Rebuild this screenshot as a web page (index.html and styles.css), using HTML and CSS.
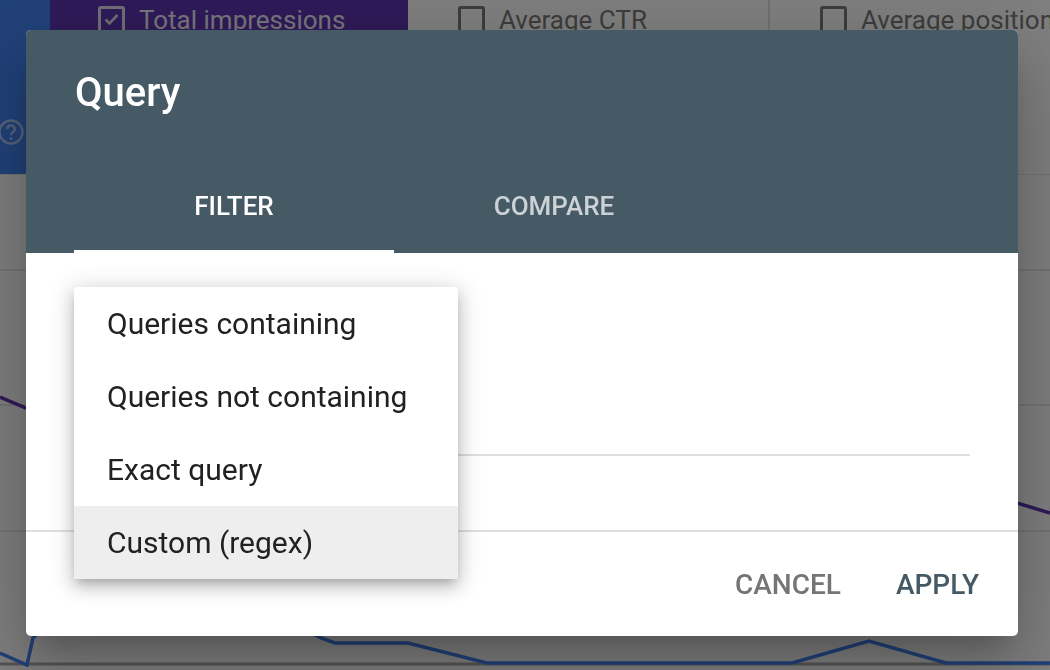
FILE: index.html
```html
<!DOCTYPE html>
<html lang="en">
  <head>
    <meta charset="UTF-8" />
    <meta name="viewport" content="width=device-width, initial-scale=1.0" />
    <title>Performance - Query filter</title>
    <link rel="stylesheet" href="styles.css">
  </head>
  <body>
    <div class="page">
      <div class="metrics">
        <div class="metric clicks">
          <svg class="help" width="26" height="26" viewBox="0 0 26 26">
            <circle cx="13" cy="13" r="11.5" fill="none" stroke="currentColor" stroke-width="2.4" />
            <path d="M9.3 10.2a3.7 3.7 0 1 1 5.6 3.1c-1.3.8-1.9 1.4-1.9 2.9" fill="none" stroke="currentColor" stroke-width="2.4" />
            <circle cx="13" cy="19.6" r="1.5" fill="currentColor" />
          </svg>
        </div>
        <div class="metric impressions">
          <span class="checkbox checked">
            <svg width="21" height="21" viewBox="0 0 21 21">
              <path d="M4.5 10.5l4 4 8-8.5" fill="none" stroke="currentColor" stroke-width="2.6" />
            </svg>
          </span>
          <span class="metric-label">Total impressions</span>
        </div>
        <div class="metric ctr">
          <span class="checkbox"></span>
          <span class="metric-label">Average CTR</span>
        </div>
        <div class="metric position">
          <span class="checkbox"></span>
          <span class="metric-label">Average position</span>
        </div>
      </div>

      <svg class="chart" width="1050" height="495" viewBox="0 0 1050 495">
        <line x1="0" y1="95" x2="1050" y2="95" class="grid" />
        <line x1="0" y1="230" x2="1050" y2="230" class="grid" />
        <line x1="0" y1="356" x2="1050" y2="356" class="grid" />
        <line x1="0" y1="489" x2="1050" y2="489" class="axis" />
        <polyline class="line-impressions" points="0,222 26,233 160,260 320,300 480,250 640,310 800,290 960,320 1017,328 1050,338" />
        <polyline class="line-clicks" points="0,478 27,490 33,463 120,380 240,420 321,463 335,468 408,468 487,488 792,488 869,466 946,488 1050,488" />
      </svg>
    </div>

    <div class="scrim"></div>

    <div class="dialog">
      <div class="dialog-header">
        <h2 class="dialog-title">Query</h2>
        <div class="tabs">
          <div class="tab active">Filter</div>
          <div class="tab">Compare</div>
        </div>
      </div>

      <div class="dialog-body">
        <div class="field">
          <div class="field-input"></div>
        </div>

        <ul class="menu">
          <li>Queries containing</li>
          <li>Queries not containing</li>
          <li>Exact query</li>
          <li class="hover">Custom (regex)</li>
        </ul>
      </div>

      <div class="dialog-actions">
        <button class="btn cancel">Cancel</button>
        <button class="btn apply">Apply</button>
      </div>
    </div>
  </body>
</html>
```

FILE: styles.css
```css
html,
body {
  margin: 0;
  padding: 0;
  height: 100%;
  overflow: hidden;
}

body {
  font-family: Roboto, "Liberation Sans", sans-serif;
  background-color: #fff;
  color: #212121;
}

/* page behind the dialog */
.metrics {
  display: flex;
  height: 174px;
  border-bottom: 1px solid #e6e6e6;
}

.metric {
  display: flex;
  align-items: flex-start;
  padding-top: 6px;
  box-sizing: border-box;
  white-space: nowrap;
  overflow: hidden;
}

.clicks {
  width: 50px;
  flex-shrink: 0;
  background-color: #4283f3;
  color: rgba(255, 255, 255, 0.55);
  padding-top: 119px;
}

.help {
  margin-left: -2px;
}

.impressions {
  width: 358px;
  flex-shrink: 0;
  background-color: #5e35b1;
  color: rgba(255, 255, 255, 0.92);
  padding-left: 48px;
}

.ctr {
  width: 360px;
  flex-shrink: 0;
  padding-left: 50px;
  color: #7a7a7a;
}

.position {
  flex: 1;
  padding-left: 50px;
  border-left: 2px solid #e0e0e0;
  color: #7a7a7a;
}

.checkbox {
  width: 27px;
  height: 27px;
  box-sizing: border-box;
  border: 3px solid currentColor;
  border-radius: 3px;
  display: flex;
  align-items: center;
  justify-content: center;
  flex-shrink: 0;
}

.checkbox.checked {
  opacity: 0.9;
}

.metric-label {
  margin-left: 14px;
  font-size: 26px;
  line-height: 30px;
  margin-top: -1px;
}

.chart {
  display: block;
}

.chart .grid {
  stroke: #e6e6e6;
  stroke-width: 2;
}

.chart .axis {
  stroke: #a8a8a8;
  stroke-width: 3;
}

.chart polyline {
  fill: none;
  stroke-width: 3.5;
  stroke-linejoin: miter;
}

.line-impressions {
  stroke: #5e35b1;
}

.line-clicks {
  stroke: #4283f3;
}

.scrim {
  position: fixed;
  inset: 0;
  background-color: rgba(0, 0, 0, 0.5);
}

/* dialog */
.dialog {
  position: fixed;
  left: 26px;
  top: 30px;
  width: 992px;
  height: 606px;
  background-color: #fff;
  border-radius: 5px;
  overflow: hidden;
  display: flex;
  flex-direction: column;
  box-shadow: 0 18px 26px -12px rgba(0, 0, 0, 0.2),
    0 40px 64px 5px rgba(0, 0, 0, 0.14),
    0 15px 78px 14px rgba(0, 0, 0, 0.12);
}

.dialog-header {
  background-color: #455a64;
  color: #fff;
}

.dialog-title {
  margin: 0;
  padding: 39px 49px 43px;
  font-size: 40px;
  font-weight: 500;
  line-height: 48px;
}

.tabs {
  display: flex;
  padding-left: 48px;
}

.tab {
  width: 320px;
  height: 93px;
  box-sizing: border-box;
  display: flex;
  align-items: center;
  justify-content: center;
  padding-top: 1px;
  font-size: 26px;
  font-weight: 500;
  text-transform: uppercase;
  color: rgba(255, 255, 255, 0.72);
  border-bottom: 3px solid transparent;
}

.tab.active {
  color: #fff;
  border-bottom-color: #fff;
}

.dialog-body {
  position: relative;
  height: 277px;
  border-bottom: 2px solid #e0e0e0;
}

.field {
  padding: 0 48px 0 49px;
}

.field-input {
  height: 201px;
  border-bottom: 2px solid #e0e0e0;
}

.menu {
  position: absolute;
  left: 48px;
  top: 34px;
  width: 384px;
  margin: 0;
  padding: 0;
  list-style: none;
  background-color: #fff;
  border-radius: 2px;
  box-shadow: 0 8px 16px 1px rgba(0, 0, 0, 0.14),
    0 3px 24px 4px rgba(0, 0, 0, 0.12),
    0 6px 9px -4px rgba(0, 0, 0, 0.2);
}

.menu li {
  height: 73px;
  display: flex;
  align-items: center;
  padding-left: 33px;
  font-size: 30px;
  color: #212121;
}

.menu li.hover {
  background-color: #eeeeee;
}

.dialog-actions {
  flex: 1;
  display: flex;
  justify-content: flex-end;
  align-items: center;
  gap: 27px;
  padding-right: 25px;
  padding-top: 0;
}

.btn {
  background: none;
  border: none;
  padding: 0 14px;
  height: 56px;
  font-family: inherit;
  font-size: 28px;
  font-weight: 500;
  text-transform: uppercase;
  cursor: pointer;
}

.btn.cancel {
  color: #757575;
}

.btn.apply {
  color: #455a64;
}
```
